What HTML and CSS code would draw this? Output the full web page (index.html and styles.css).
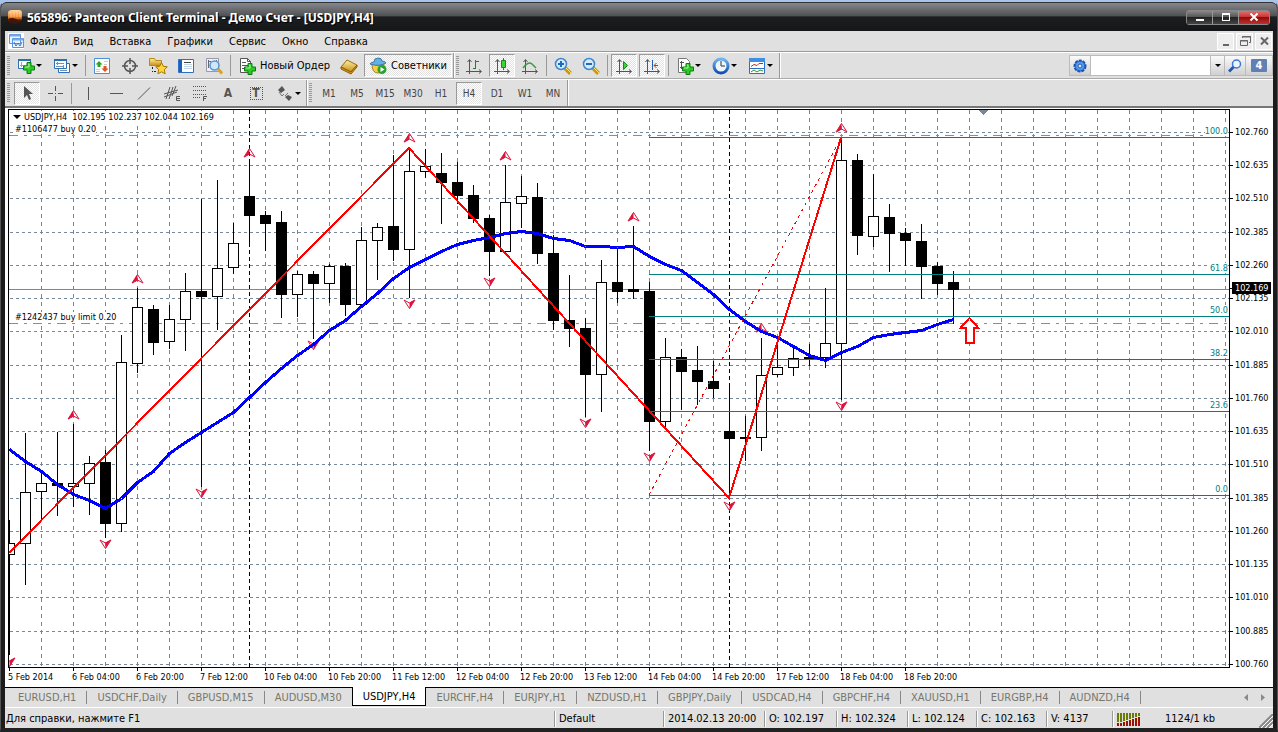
FILE: index.html
```
<!DOCTYPE html>
<html lang="ru">
<head>
    <meta charset="UTF-8">
    <meta name="viewport" content="width=device-width, initial-scale=1.0">
    <title>565896: Panteon Client Terminal</title>
    <link rel="stylesheet" href="styles.css">
</head>
<body>
<svg class="defs" width="0" height="0">
    <defs>
        <linearGradient id="orange" x1="0" y1="0" x2="0" y2="1"><stop offset="0" stop-color="#ffd9a0"/><stop offset=".5" stop-color="#f58a2c"/><stop offset="1" stop-color="#5a1c04"/></linearGradient>
        <linearGradient id="gold" x1="0" y1="0" x2="0" y2="1"><stop offset="0" stop-color="#fff0a0"/><stop offset="1" stop-color="#c98f14"/></linearGradient>
        <linearGradient id="blue" x1="0" y1="0" x2="0" y2="1"><stop offset="0" stop-color="#6fb4f2"/><stop offset="1" stop-color="#0f4fb0"/></linearGradient>
        <symbol id="plus" viewBox="0 0 12 12"><path d="M4 .5h4V4h3.500v4H8v3.500H4V8H.5V4H4z" fill="#2ec926" stroke="#0a7d12"/><path d="M5 2h1v3H2" fill="none" stroke="#b5f5a5"/></symbol>
        <symbol id="axes" viewBox="0 0 18 18"><path d="M4.500 3v14M1 14.500h15M2.500 5l2-2.500 2 2.500M14 12.500l2.500 2-2.500 2" fill="none" stroke="#555"/></symbol>
    </defs>
</svg>
<div class="window">
    <header class="title">
        <svg width="16" height="16" viewBox="0 0 16 16"><path d="M1 4q0-3 4-3h7q3 0 3 3v5q-1 5-7 5-5 0-7-3z" fill="url(#orange)"/><path d="M4 3v5M7 2v6M10 2v6M13 3v5" stroke="#ffe6c4" opacity=".6"/><path d="M1 10q4-2 8 0 3 1 5 0-1 5-6 5-6 0-7-5z" fill="#421505"/></svg>
        <h1>565896: Panteon Client Terminal - Демо Счет - [USDJPY,H4]</h1>
        <div class="winbtns">
            <button aria-label="Свернуть"><svg width="14" height="10"><path d="M3 8h8" stroke="#fff" stroke-width="2"/></svg></button>
            <button aria-label="Развернуть"><svg width="14" height="10"><path d="M3 8.500h8M3.500 2v7M10.500 2v7" stroke="#fff" fill="none"/><path d="M3 2h8" stroke="#fff" stroke-width="2"/></svg></button>
            <button class="red" aria-label="Закрыть"><svg width="14" height="10"><path d="M3.500 1.500l7 7M10.500 1.500l-7 7" stroke="#fff" stroke-width="2"/></svg></button>
        </div>
    </header>
    <nav class="menu">
        <svg width="16" height="16" viewBox="0 0 16 16"><path d="M0 0h16v16H0z" fill="#fff"/><path d="M1.500 1.500h11v9h-11zM4.500 5.500h11v9h-11z" fill="#eaf3ff" stroke="#5b95dd"/><path d="M2 2.500h10M5 6.500h10" stroke="#77aaea" stroke-width="2"/><path d="M6 9l2 4 2-3 2 3 2-4" fill="none" stroke="#3b76c4"/></svg>
        <button>Файл</button><button>Вид</button><button>Вставка</button><button>Графики</button><button>Сервис</button><button>Окно</button><button>Справка</button>
        <div class="mdi">
            <button aria-label="Свернуть окно"><svg width="14" height="14"><path d="M4 11h6" stroke="#666" stroke-width="2"/></svg></button>
            <button aria-label="Восстановить окно"><svg width="14" height="14"><path d="M4.500 4V2.500h8v6H11M2.500 6.500h7v5h-7zM4 3h9M2 7h8" fill="none" stroke="#666"/></svg></button>
            <button aria-label="Закрыть окно"><svg width="14" height="14"><path d="M4 3.500l7 7M11 3.500l-7 7" stroke="#666" stroke-width="2"/></svg></button>
        </div>
    </nav>
    <div class="toolbar first">
        <div class="band">
            <i class="grip"></i>
            <button class="drop" aria-label="Новый график"><svg width="18" height="18"><path d="M1.500 2.500h12v9h-12z" fill="#fff" stroke="#2d6fb5"/><path d="M1 3h13" stroke="#2d6fb5" stroke-width="2"/><path d="M4.500 5v5M3 8.500h8" stroke="#8aa"/><use href="#plus" x="6" y="5" width="12" height="12"/></svg></button>
            <button class="drop" aria-label="Профили"><svg width="18" height="18"><path d="M5.500 6.500h11v9h-11z" fill="#fff" stroke="#2d6fb5"/><path d="M1.500 2.500h12v9h-12z" fill="#fff" stroke="#2d6fb5"/><path d="M1 3h13" stroke="#2d6fb5" stroke-width="2"/><path d="M3 6.500h8M3 9.500h8M7 13.500h7M4.500 5v3M10.500 8v3" stroke="#6c93bd"/></svg></button>
            <i class="sep"></i>
            <button aria-label="Обзор рынка"><svg width="18" height="18"><path d="M1.500 1.500h15v15h-15z" fill="#fff" stroke="#4c8fd8"/><path d="M11 4.500h4M11 7.500h3M3 12.500h4M3 14.500h4" stroke="#ccc"/><path d="M6 4l3.500 3.500H7.500V10h-3V7.500h-2z" fill="#28a528"/><path d="M12 15l-3.500-3.500h2V9h3v2.500h2z" fill="#e2551c"/></svg></button>
            <button aria-label="Окно данных"><svg width="18" height="18" fill="none" stroke="#555"><circle cx="9" cy="9" r="5.500" stroke-width="1.500"/><path d="M9 1v6M9 11v6M1 9h6M11 9h6" stroke-width="1.500"/></svg></button>
            <button aria-label="Навигатор"><svg width="20" height="18"><path d="M1.500 8.500v-7h5l1 2h6v5z" fill="url(#gold)" stroke="#b98a15"/><path d="M4.500 10v2M4.500 14v1M6 14.500h2" stroke="#222"/><path d="M13.500 5.500l1.800 3.800 4 .5-3 2.800.8 4.200-3.600-2-3.600 2 .8-4.200-3-2.800 4-.5z" fill="#ffd83a" stroke="#a87406"/></svg></button>
            <button aria-label="Терминал"><svg width="18" height="18"><path d="M1.500 2.500h15v13h-15z" fill="#fff" stroke="#2d6fc5"/><path d="M3.500 3v12" stroke="#1f5fb5" stroke-width="3"/><path d="M7 7.500h8M7 9.500h8M7 11.500h8" stroke="#c5d5e8"/><path d="M7 5.500h7" stroke="#444"/></svg></button>
            <button aria-label="Тестер"><svg width="18" height="18"><path d="M1.500 1.500h12v13h-12z" fill="#eef" stroke="#99a"/><path d="M3.500 3v8M11.500 3v5M3 4.500h3" stroke="#667"/><circle cx="9.500" cy="8.500" r="4.500" fill="#cfe7fb" stroke="#5b93cf" stroke-width="1.500"/><path d="M13 12l4 4.500" stroke="#d9a521" stroke-width="3"/></svg></button>
            <i class="sep"></i>
            <button class="text"><svg width="18" height="18"><path d="M2.500 1.500h7l3 3v11h-10z" fill="#fff" stroke="#555"/><path d="M9.500 1.500v3h3M4 5.500h4M4 8.500h6M4 11.500h3" stroke="#555" fill="none"/><use href="#plus" x="6" y="6" width="12" height="12"/></svg>Новый Ордер</button>
            <button aria-label="Редактор"><svg width="18" height="18"><path d="M1 10l6-7 10 5-6 7z" fill="url(#gold)" stroke="#9a6a10"/><path d="M1 10v2l10 5 6-7V8l-6 7z" fill="#d59a22" stroke="#8c5d09"/></svg></button>
            <button class="text on"><svg width="18" height="18"><path d="M3 7q5 3 12 0 0 9-6 9T3 7z" fill="#f5cf42" stroke="#a98211"/><path d="M1 7q1-2 4-2 0-4 4-4t4 3q3 0 4 2-7 4-16 1z" fill="#66b1e3" stroke="#3778b0"/><circle cx="13" cy="12.500" r="4.500" fill="#29a32b"/><path d="M11.500 10l4 2.500-4 2.500z" fill="#fff"/></svg>Советники</button>
        </div>
        <div class="band">
            <i class="grip"></i>
            <button aria-label="Бары"><svg width="18" height="18"><use href="#axes" width="18" height="18"/><path d="M10.500 3v9M8 11.500h2M11 4.500h3" stroke="#138a1b" fill="none"/></svg></button>
            <button class="on" aria-label="Свечи"><svg width="18" height="18"><use href="#axes" width="18" height="18"/><path d="M10.500 1v12" stroke="#138a1b"/><path d="M8.500 3.500h4v7h-4z" fill="#3bd43b" stroke="#138a1b"/></svg></button>
            <button aria-label="Линия"><svg width="18" height="18"><use href="#axes" width="18" height="18"/><path d="M2 11q5-7 9-4l4 4" stroke="#3b9b41" fill="none" stroke-width="1.500"/></svg></button>
            <i class="sep"></i>
            <button aria-label="Увеличить"><svg width="18" height="18"><path d="M11 11l5.500 5.500" stroke="#c99718" stroke-width="4"/><path d="M12 11l5 5" stroke="#ffe163"/><circle cx="7" cy="7" r="5.500" fill="#d4ebfc" stroke="#3b86d3" stroke-width="1.500"/><path d="M7 4v6M4 7h6" stroke="#2369b8" stroke-width="2"/></svg></button>
            <button aria-label="Уменьшить"><svg width="18" height="18"><path d="M11 11l5.500 5.500" stroke="#c99718" stroke-width="4"/><path d="M12 11l5 5" stroke="#ffe163"/><circle cx="7" cy="7" r="5.500" fill="#d4ebfc" stroke="#3b86d3" stroke-width="1.500"/><path d="M4 7h6" stroke="#2369b8" stroke-width="2"/></svg></button>
            <i class="sep"></i>
            <button class="on" aria-label="Автопрокрутка"><svg width="18" height="18"><use href="#axes" width="18" height="18"/><path d="M8.500 4.500l4 4-4 4z" fill="#3bd43b" stroke="#138a1b"/></svg></button>
            <button class="on" aria-label="Сдвиг"><svg width="18" height="18"><use href="#axes" width="18" height="18"/><path d="M9.500 3v10" stroke="#1b5fae"/><path d="M15 8.500h-4M13.500 6L11 8.500l2.500 2.500" stroke="#c03a10" fill="none"/></svg></button>
            <i class="sep"></i>
            <button class="drop" aria-label="Индикаторы"><svg width="18" height="18"><path d="M2.500 1.500h8l3 3v11h-11z" fill="#fff" stroke="#777"/><path d="M5.500 4v8M4 5.500h4M4 10.500h3" stroke="#555"/><use href="#plus" x="6" y="6" width="12" height="12"/></svg></button>
            <button class="drop" aria-label="Периоды"><svg width="18" height="18"><circle cx="9" cy="9" r="7" fill="#eef6fd" stroke="url(#blue)" stroke-width="3"/><path d="M9 4v5h4" stroke="#333" fill="none"/></svg></button>
            <button class="drop" aria-label="Шаблоны"><svg width="18" height="18"><path d="M1.500 1.500h15v15h-15z" fill="#fff" stroke="#2d6fc5"/><path d="M1 3h16" stroke="#3e8ee2" stroke-width="4"/><path d="M3 9.500l3-2 3 1 2-2h4" stroke="#b33215" fill="none"/><path d="M2 11.500h14" stroke="#2d6fc5"/><path d="M3 15l3-2 3 2 3-2 3 1" stroke="#27962b" fill="none"/></svg></button>
        </div>
        <form class="search">
            <button type="button" aria-label="Настройки"><svg width="14" height="14"><circle cx="7" cy="7" r="5.500" fill="#2f78d6" stroke="#1c57b0" stroke-width="2" stroke-dasharray="3 1"/><circle cx="7" cy="7" r="4" fill="#5b9cec"/><circle cx="7" cy="7" r="2" fill="#d9e8f9" stroke="#1c57b0"/></svg></button>
            <input type="text" aria-label="Поиск">
            <button type="button" class="small" aria-label="История"><i class="arrow"></i></button>
            <button type="button" aria-label="Найти"><svg width="14" height="14"><circle cx="8.500" cy="5" r="4" fill="#edf4fc" stroke="#3b78d2" stroke-width="1.500"/><path d="M5.500 8L1 12.500" stroke="#2458b2" stroke-width="3"/></svg></button>
            <button type="button" class="chat"><span>4</span></button>
        </form>
    </div>
    <div class="toolbar">
        <div class="band">
            <i class="grip"></i>
            <button class="on" aria-label="Курсор"><svg width="18" height="18"><path d="M6 2v12l3-3 2 5 2-1-2-5h4z" fill="#555"/></svg></button>
            <button aria-label="Перекрестие"><svg width="18" height="18"><path d="M9.500 2v5M9.500 12v5M2 9.500h5M12 9.500h5M9 9.500h1" stroke="#555"/></svg></button>
            <i class="sep"></i>
            <button aria-label="Вертикальная линия"><svg width="18" height="18"><path d="M9.500 3v13" stroke="#555"/></svg></button>
            <button aria-label="Горизонтальная линия"><svg width="18" height="18"><path d="M3 9.500h13" stroke="#555"/></svg></button>
            <button aria-label="Трендовая линия"><svg width="18" height="18"><path d="M3 15.500L15 3.500" stroke="#555"/></svg></button>
            <button aria-label="Каналы"><svg width="18" height="18"><path d="M1 10l14-4M1 13l13-5M3 15L7 3M6 15l4-12M9 12l4-10" stroke="#555"/><path d="M17 12.500h-3.500v4H17M14 14.500h3" stroke="#555" fill="none"/></svg></button>
            <button aria-label="Фибоначчи"><svg width="18" height="18"><path d="M2 2.500h14M2 6.500h14M2 10.500h14M2 13.500h8" stroke="#555" stroke-dasharray="1 1"/><path d="M12.500 17v-4.500H16M12 14.500h3" stroke="#555" fill="none"/></svg></button>
            <button class="letter">A</button>
            <button class="letter"><span>T</span></button>
            <button class="drop" aria-label="Стрелки"><svg width="18" height="18"><path d="M2 6l4-4 3 4-4 3zM9 13l3-2 4 2-3 4z" fill="#555"/><path d="M3 8l3 4 2-2M12 9l-3 3" stroke="#777" fill="none"/></svg></button>
        </div>
        <div class="band periods">
            <i class="grip"></i>
            <button>M1</button><button>M5</button><button>M15</button><button>M30</button><button>H1</button><button class="on">H4</button><button>D1</button><button>W1</button><button>MN</button>
        </div>
    </div>
    <main class="chart">
        <div class="plot">
            <svg id="canvas" width="100%" height="100%"></svg>
            <div class="info"><i class="arrow"></i> USDJPY,H4&nbsp; 102.195 102.237 102.044 102.169</div>
            <div class="order buy">#1106477 buy 0.20</div>
            <div class="order limit">#1242437 buy limit 0.20</div>
            <div id="levels"></div>
        </div>
        <div class="prices" id="prices"></div>
        <div class="times" id="times"></div>
    </main>
    <nav class="tabs">
        <button>EURUSD,H1</button><button>USDCHF,Daily</button><button>GBPUSD,M15</button><button>AUDUSD,M30</button><button class="active">USDJPY,H4</button><button>EURCHF,H4</button><button>EURJPY,H1</button><button>NZDUSD,H1</button><button>GBPJPY,Daily</button><button>USDCAD,H4</button><button>GBPCHF,H4</button><button>XAUUSD,H1</button><button>EURGBP,H4</button><button>AUDNZD,H4</button>
        <svg width="24" height="8"><path d="M5 0v7L1 3.500zM18 0v7l4-3.500z" fill="#8a8a8a"/></svg>
    </nav>
    <footer class="status">
        <span>Для справки, нажмите F1</span><span>Default</span><span>2014.02.13 20:00</span><span>O: 102.197</span><span>H: 102.324</span><span>L: 102.124</span><span>C: 102.163</span><span>V: 4137</span>
        <span class="net">
            <svg width="24" height="13"><path d="M1 0v9M4 0v9M7 0v8M10 0v7M13 0v6M16 0v5M19 0v4M22 0v3" stroke="#6b7a00" stroke-width="2"/><path d="M1 10v3M4 10v3M7 9v4M10 8v5M13 7v6M16 6v7M19 5v8M22 4v9" stroke="#9c1400" stroke-width="2"/></svg>
            <span>1124/1 kb</span>
            <svg class="resize" width="14" height="14"><path d="M0 14L14 0M4 14L14 4M8 14l6-6" stroke="#888" stroke-width="2"/><path d="M2 14L14 2M6 14l8-8M10 14l4-4" stroke="#fff"/></svg>
        </span>
    </footer>
</div>
<script src="script.js"></script>
</body>
</html>
```
FILE: styles.css
```
*{box-sizing: border-box;}
body{margin: 0;height: 100vh;overflow: hidden;background-color: #a9c4ea;font-family: 'DejaVu Sans Condensed','DejaVu Sans',sans-serif;font-size: 11px;color: #000;}
button{border: 0;padding: 0;margin: 0;background: none;font: inherit;color: inherit;}
svg{display: block;flex: none;}
.defs{position: absolute;}

.window{
    height: 100vh;
    padding: 3px 4px 0;
    display: flex;
    flex-direction: column;
    background-color: #1c1c1c;
    border: solid #555;
    border-width: 0 1px;
    border-top: 2px solid #a9c4ea;
    border-bottom: 4px solid #222;
    border-radius: 8px 8px 0 0;
}
.title{
    height: 29px;
    flex: none;
    margin: -3px -4px 0;
    padding: 0 7px 0 6px;
    display: flex;
    align-items: center;
    gap: 4px;
    border-radius: 6px 6px 0 0;
    border-top: 1px solid #333;
    background: linear-gradient(#85878a,#505255 45%,#1d1e20 50%,#151617);
}
.title h1{
    margin: 0;
    flex: 1;
    font-family: 'Noto Sans','DejaVu Sans Condensed',sans-serif;
    font-size: 12px;
    color: #fff;
    white-space: nowrap;
    text-shadow: 1px 1px 0 #000;
}
.winbtns{display: flex;border: 1px solid #888;border-radius: 3px;}
.winbtns button{
    width: 26px;
    height: 13px;
    display: flex;
    align-items: center;
    justify-content: center;
    background: linear-gradient(#888,#555 45%,#222 50%,#444);
    border-right: 1px solid #999;
}
.winbtns .red{width: 30px;border: 0;background: linear-gradient(#e07070,#c33 45%,#8e0c0c 50%,#c03030);}

.menu{
    height: 21px;
    flex: none;
    display: flex;
    align-items: center;
    padding-left: 3px;
    background-color: #e0e0e0;
    border-bottom: 1px solid #999;
    font-size: 11px;
}
.menu > svg{margin-right: 6px;}
.menu > button{margin-right: 16px;}
.mdi{margin-left: auto;display: flex;gap: 2px;padding-right: 1px;}
.mdi button{width: 17px;height: 17px;display: flex;align-items: center;justify-content: center;border: 1px solid #fff;background-color: #eee;}

.toolbar{
    height: 27px;
    flex: none;
    display: flex;
    background-color: #e0e0e0;
    border-top: 1px solid #fff;
}
.toolbar.first{border-bottom: 1px solid #aaa;}
.band{
    display: flex;
    align-items: center;
    gap: 2px;
    padding: 0 1px 0 2px;
    border-right: 1px solid #999;
    box-shadow: 1px 0 0 #fff;
}
.grip{
    width: 3px;
    height: 20px;
    margin-right: 2px;
    background: repeating-linear-gradient(#999 0 1px,#e0e0e0 1px 2px);
}
.first .grip{margin-right: 0;}
.band button{
    width: 26px;
    height: 23px;
    display: flex;
    align-items: center;
    justify-content: center;
}
.band .on{
    background: repeating-conic-gradient(#fff 0 25%,#e2e2e2 0 50%) 0 0/2px 2px;
    border: 1px solid;
    border-color: #999 #fff #fff #999;
}
.band .drop{width: 34px;gap: 1px;}
.drop::after,.arrow{
    content: '';
    border: 3px solid transparent;
    border-top-color: #000;
    border-bottom: 0;
}
.band .text{width: auto;padding: 0 4px;gap: 4px;}
.sep{width: 1px;height: 21px;background-color: #999;margin: 0 1px;}
.letter{font-size: 12px;font-weight: 700;color: #555;}
.letter span{border: 1px dotted #555;width: 13px;height: 13px;line-height: 11px;}
.periods{font-size: 10px;color: #444;}

.search{
    margin: 2px 0 0 auto;
    height: 21px;
    width: 204px;
    display: flex;
    border: 1px solid #bbb;
    background-color: #bbb;
    gap: 1px;
}
.search button{width: 20px;display: flex;align-items: center;justify-content: center;background: linear-gradient(#fafafa,#d0d0d0);}
.search input{flex: 1;min-width: 0;border: 0;background-color: #fff;}
.search .small{width: 13px;}
.search .chat{width: 26px;}
.chat span{
    width: 16px;
    height: 13px;
    line-height: 13px;
    font-weight: 700;
    color: #fff;
    background-color: #6080b5;
    border-radius: 1px;
}

.chart{
    flex: 1;
    min-height: 0;
    display: grid;
    grid-template-columns: 1fr 43px;
    grid-template-rows: 1fr 19px;
    background-color: #fff;
    padding: 1px 0 0 3px;
    border: solid #777;
    border-width: 2px 0 0;
    font-size: 9px;
    line-height: 12px;
    white-space: nowrap;
}
.plot{position: relative;border: 1px solid #000;overflow: hidden;min-height: 0;}
#canvas{shape-rendering: crispEdges;}
.info,.order{position: absolute;left: 4px;background-color: #fff;display: flex;align-items: center;gap: 3px;}
.info{top: 1px;}
.order{left: 6px;line-height: 10px;}
.info .arrow{border-width: 4px 4px 0;}
.buy{top: 14px;}
.limit{top: 202px;}
#levels span{position: absolute;right: 1px;color: #008080;background-color: #fff;line-height: 10px;}
.prices{position: relative;}
.prices span{position: absolute;left: 2px;padding-left: 3px;}
.prices span::before{content: '';position: absolute;left: -2px;top: 6px;width: 3px;height: 1px;background-color: #000;}
.prices .bid{background-color: #000;color: #fff;right: 2px;}
.times{grid-column: 1 / 3;display: flex;}
.times span{width: 64px;flex: none;padding-top: 3px;position: relative;}
.times span::before{content: '';position: absolute;left: 1px;top: 0;width: 1px;height: 3px;background-color: #000;}

.tabs{
    height: 21px;
    flex: none;
    display: flex;
    align-items: center;
    padding-left: 3px;
    background-color: #e0e0e0;
    border-top: 1px solid #000;
    border-bottom: 1px solid #fff;
    color: #77776b;
    font-size: 11px;
}
.tabs button{padding: 0 10px;height: 13px;line-height: 13px;border-right: 1px solid #888;}
.tabs button:nth-child(4){border: 0;}
.tabs .active{
    height: 19px;
    align-self: flex-start;
    line-height: 17px;
    margin-top: -1px;
    background-color: #fff;
    color: #000;
    border: 1px solid #000;
    border-top: 0;
}
.tabs svg{margin: 0 6px 0 auto;}

.status{
    height: 20px;
    flex: none;
    display: grid;
    grid-template-columns: 1fr 109px 101px 72px 71px 69px 70px 66px 161px;
    align-items: center;
    padding-top: 2px;
    background-color: #e0e0e0;
    font-size: 11px;
}
.status > span{height: 16px;line-height: 16px;padding-left: 4px;border-left: 1px solid #999;box-shadow: inset 1px 0 0 #fff;white-space: nowrap;}
.status > span:first-child{border: 0;box-shadow: none;padding-left: 1px;}
.status .net{display: flex;align-items: center;gap: 24px;}
.resize{margin: 4px 0 0 auto;}
```
FILE: script.js
```
// x step is 16px per bar, rows are: high, body top, body bottom, low, filled
const bars = [
    [520,543,554,654,0],[433,492,543,584,0],[472,483,491,518,0],[432,483,485,515,1],[424,483,486,506,0],
    [456,463,483,514,0],[450,462,523,537,1],[335,362,523,531,0],[288,307,363,372,0],[305,309,342,354,1],
    [305,319,341,348,0],[273,291,319,350,0],[199,291,296,486,1],[180,268,296,329,0],[223,243,267,273,0],
    [162,196,215,243,1],[211,215,223,250,1],[211,222,294,317,1],[271,274,294,316,0],[271,274,283,338,1],
    [264,266,283,302,0],[263,266,304,315,1],[227,240,304,304,0],[223,227,240,279,0],[155,226,249,260,1],
    [150,171,249,297,0],[149,166,171,177,0],[153,173,182,223,1],[162,182,195,203,1],[185,195,218,222,1],
    [215,218,251,275,1],[165,202,251,251,0],[176,196,203,227,0],[183,197,253,263,1],[235,253,320,329,1],
    [275,320,328,346,1],[318,328,374,416,1],[260,282,374,411,0],[248,282,291,302,1],[226,289,291,298,1],
    [282,291,421,450,1],[338,357,421,426,0],[349,357,371,409,1],[346,370,381,404,1],[361,381,388,397,1],
    [383,431,438,498,1],[416,437,438,460,1],[338,375,437,450,0],[343,367,374,376,0],[348,358,367,375,0],
    [344,357,358,365,1],[288,343,357,367,0],[138,160,343,399,0],[154,160,235,254,1],[174,216,236,246,0],
    [204,217,233,271,1],[228,233,240,265,1],[224,241,266,298,1],[262,266,283,294,1],[271,282,289,323,1]
];
const average = [449,461,471,484,494,500,508,498,482,471,453,442,432,422,412,397,382,368,355,344,330,320,306,293,278,267,259,251,244,240,237,233,231,233,238,240,246,246,247,246,256,264,270,282,294,309,321,331,337,346,355,360,352,346,337,334,332,330,324,319];
const up = [[249,153],[137,279],[73,415],[409,138],[505,156],[633,217],[761,328],[841,128]];
const down = [[9,662],[313,345],[409,304],[489,282],[201,493],[105,544],[585,423],[649,457],[729,506],[841,406]];
const levels = [['100.0',137],['61.8',274],['50.0',316],['38.2',359],['23.6',411],['0.0',495]];
const times = ['5 Feb 2014','6 Feb 04:00','6 Feb 20:00','7 Feb 12:00','10 Feb 04:00','10 Feb 20:00','11 Feb 12:00','12 Feb 04:00','12 Feb 20:00','13 Feb 12:00','14 Feb 04:00','14 Feb 20:00','17 Feb 12:00','18 Feb 04:00','18 Feb 20:00'];

const left = 9, top0 = 110;
const line = (x1, y1, x2, y2, attrs) => `<line x1="${x1}" y1="${y1}" x2="${x2}" y2="${y2}" ${attrs}/>`;
let out = '';
let prices = '';

// grid
for (let i = 0; i < 17; i++) {
    const y = Math.floor(132 + 33.25 * i + 0.49) - top0;
    out += line(1, y + 0.5, '100%', y + 0.5, 'stroke="#778899" stroke-dasharray="3 3"');
    prices += `<span style="top:${y - 5}px">${(102.76 - 0.125 * i).toFixed(4).slice(0, 7)}</span>`;
}
for (let x = 32; x < 3000; x += 32) {
    out += line(x + 0.5, 0, x + 0.5, '100%', 'stroke="#778899" stroke-dasharray="4 4"');
}
for (const x of [240, 720]) {
    out += line(x + 0.5, 0, x + 0.5, '100%', 'stroke="#fff"');
    out += line(x + 0.5, 0, x + 0.5, '100%', 'stroke="#000" stroke-dasharray="4 3"');
}
for (const y of [25, 213]) out += line(0, y + 0.5, '100%', y + 0.5, 'stroke="#32cd32" stroke-dasharray="9 6 3 6"');
out += line(0, 179.5, '100%', 179.5, 'stroke="#778899"');

// candles
bars.forEach((b, i) => {
    const x = i * 16;
    out += line(x + 0.5, b[0] - top0, x + 0.5, b[3] - top0 + 1, 'stroke="#000"');
    out += `<rect x="${x - 4.5}" y="${b[1] - top0 + 0.5}" width="10" height="${b[2] - b[1]}" fill="${b[4] ? '#000' : '#fff'}" stroke="#000"/>`;
});

for (const [name, y] of levels) out += line(640, y - top0 + 0.5, '100%', y - top0 + 0.5, 'stroke="#008080"');

// fractals: one half is solid, the other is an outline
const fractal = '<path d="M5.5 0L0 9.500 5.500 6.500z" fill="#dc143c"/><path d="M5.500 .5L11 9 5.500 6 0 9z" stroke="#dc143c" fill="none"/>';
for (const [x, y] of up) {
    out += `<g shape-rendering="auto" transform="translate(${x - left - 5},${y - top0 - 5})">${fractal}</g>`;
}
for (const [x, y] of down) {
    out += `<g shape-rendering="auto" transform="translate(${x - left + 6},${y - top0 + 5}) rotate(180)">${fractal}</g>`;
}

out += `<polyline points="${average.map((y, i) => `${i * 16 + 0.5},${y - top0 + 0.5}`).join(' ')}" fill="none" stroke="#0000ff" stroke-width="3"/>`;
out += '<polyline points="0,443 400,38 720,388 832,28" fill="none" stroke="#ff0000" stroke-width="2"/>';
out += line(640, 385, 832, 28, 'stroke="#ff0000" stroke-dasharray="3 4"');
out += '<path d="M960.500 208l9 10h-5v15h-8v-15h-5z" fill="#fff" stroke="#ff0000" stroke-width="2"/>';
out += '<path d="M969 0h11l-5.500 5z" fill="#778899"/>';

document.getElementById('canvas').innerHTML = out;
document.getElementById('prices').innerHTML = prices + '<span class="bid" style="top:173px">102.169</span>';
document.getElementById('levels').innerHTML = levels.map(([n, y]) => `<span style="top:${y - top0 - 11}px">${n}</span>`).join('');
document.getElementById('times').innerHTML = times.map(t => `<span>${t}</span>`).join('');
```
